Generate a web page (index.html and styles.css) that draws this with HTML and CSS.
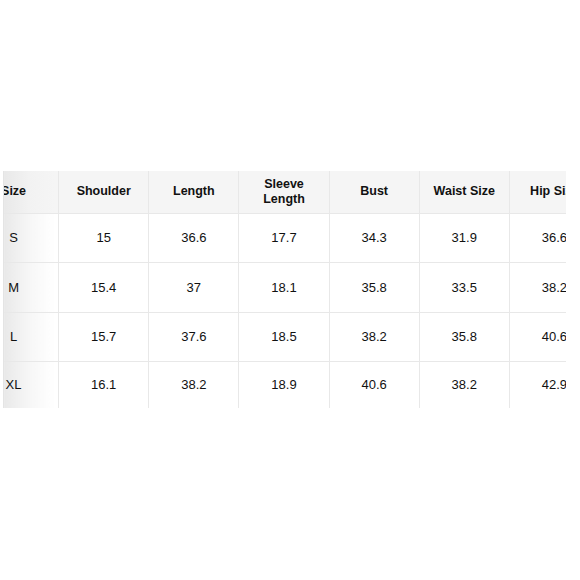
FILE: index.html
```
<!DOCTYPE html>
<html>
<head>
<meta charset="utf-8">
<link rel="stylesheet" href="styles.css">
</head>
<body>
<div class="wrap">
  <table class="sizes">
    <thead>
      <tr class="head">
        <th class="first">Size</th>
        <th>Shoulder</th>
        <th>Length</th>
        <th>Sleeve<br>Length</th>
        <th>Bust</th>
        <th>Waist Size</th>
        <th>Hip Size</th>
      </tr>
    </thead>
    <tbody>
      <tr class="r1"><td class="first">S</td><td>15</td><td>36.6</td><td>17.7</td><td>34.3</td><td>31.9</td><td>36.6</td></tr>
      <tr class="r2"><td class="first">M</td><td>15.4</td><td>37</td><td>18.1</td><td>35.8</td><td>33.5</td><td>38.2</td></tr>
      <tr class="r3"><td class="first">L</td><td>15.7</td><td>37.6</td><td>18.5</td><td>38.2</td><td>35.8</td><td>40.6</td></tr>
      <tr class="r4"><td class="first">XL</td><td>16.1</td><td>38.2</td><td>18.9</td><td>40.6</td><td>38.2</td><td>42.9</td></tr>
    </tbody>
  </table>
</div>
</body>
</html>
```
FILE: styles.css
```
html, body {
  margin: 0;
  padding: 0;
  background: #ffffff;
}
body {
  width: 580px;
  height: 580px;
  font-family: "Liberation Sans", Arial, sans-serif;
  color: #111;
}
.wrap {
  margin-top: 171px;
  margin-left: 3px;
  width: 563px;
  overflow: hidden;
  border-left: 1px solid #e4e4e4;
  box-sizing: border-box;
}
.sizes {
  margin-left: -35px;
  width: 630px;
  min-width: 630px;
  table-layout: fixed;
  border-collapse: collapse;
}
.sizes th, .sizes td {
  width: 89px;
  padding: 0;
  text-align: center;
  vertical-align: middle;
  border-left: 1px solid #e8e8e8;
  border-bottom: 1px solid #e8e8e8;
}
.sizes th {
  font-size: 12.5px;
  font-weight: bold;
  line-height: 15px;
  background: #f5f5f5;
}
.sizes td {
  font-size: 13px;
  line-height: 15px;
}
.sizes .first {
  border-left: none;
  background: linear-gradient(to right, #ffffff 0, #ffffff 30px, #e9e9e9 36px, #f6f6f6 60px, #ffffff 85px);
}
.sizes th.first {
  background: linear-gradient(to right, #f5f5f5 0, #f5f5f5 30px, #e9e9e9 36px, #f2f2f2 60px, #f5f5f5 85px);
}
.head { height: 42px; }
.r1 { height: 49px; }
.r2 { height: 50px; }
.r3 { height: 49px; }
.r4 { height: 47px; }
.r4 td { border-bottom: none; }
```
